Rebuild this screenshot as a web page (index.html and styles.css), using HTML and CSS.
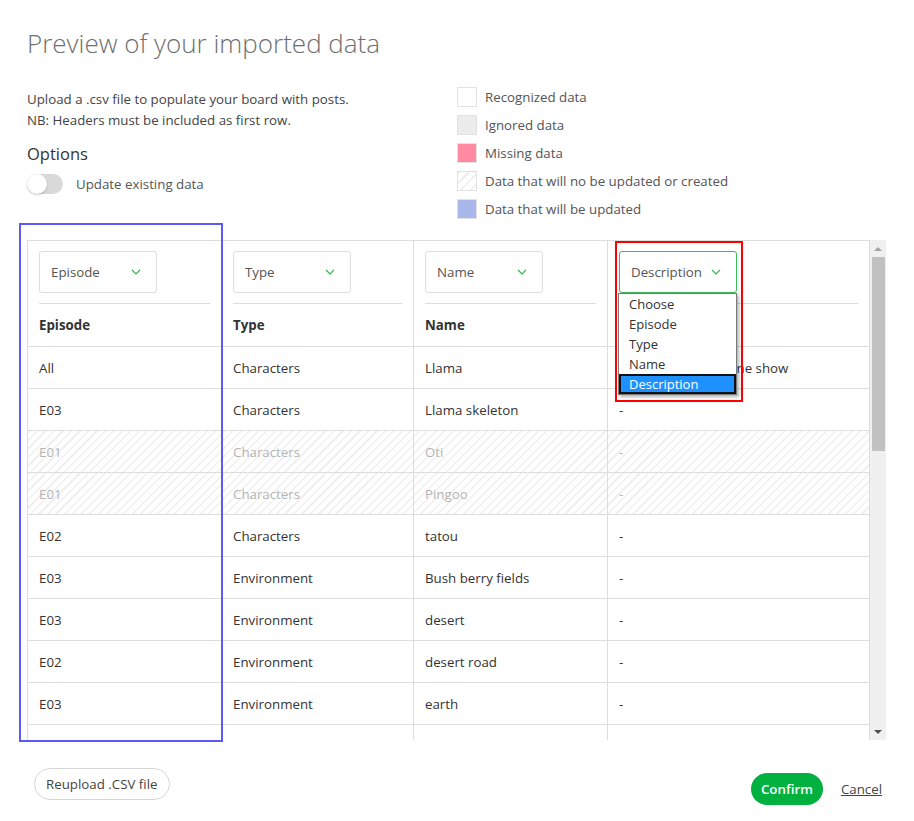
FILE: index.html
```html
<!DOCTYPE html>
<html lang="en">
<head>
<meta charset="utf-8">
<title>Preview of your imported data</title>
<link rel="stylesheet" href="styles.css">
</head>
<body>
<div class="page">
  <h1 class="title">Preview of your imported data</h1>

  <div class="top">
    <div class="intro">
      <p class="desc">Upload a .csv file to populate your board with posts.<br>NB: Headers must be included as first row.</p>
      <h2 class="options">Options</h2>
      <label class="toggle-row"><span class="toggle"><span class="knob"></span></span><span>Update existing data</span></label>
    </div>
    <ul class="legend">
      <li><span class="swatch sw-recognized"></span>Recognized data</li>
      <li><span class="swatch sw-ignored"></span>Ignored data</li>
      <li><span class="swatch sw-missing"></span>Missing data</li>
      <li><span class="swatch sw-hatched"></span>Data that will no be updated or created</li>
      <li><span class="swatch sw-updated"></span>Data that will be updated</li>
    </ul>
  </div>

  <div class="table-area">
    <div class="grid-wrap">
      <div class="viewport">
        <div class="row head">
          <div class="hcell">
            <div class="select"><span>Episode</span><svg class="chev" width="10" height="6" viewBox="0 0 10 6"><polyline points="1,1 5,5 9,1"/></svg></div>
            <div class="hline"></div>
            <div class="hlabel">Episode</div>
          </div>
          <div class="hcell">
            <div class="select"><span>Type</span><svg class="chev" width="10" height="6" viewBox="0 0 10 6"><polyline points="1,1 5,5 9,1"/></svg></div>
            <div class="hline"></div>
            <div class="hlabel">Type</div>
          </div>
          <div class="hcell">
            <div class="select"><span>Name</span><svg class="chev" width="10" height="6" viewBox="0 0 10 6"><polyline points="1,1 5,5 9,1"/></svg></div>
            <div class="hline"></div>
            <div class="hlabel">Name</div>
          </div>
          <div class="hcell">
            <div class="select active"><span>Description</span><svg class="chev" width="10" height="6" viewBox="0 0 10 6"><polyline points="1,1 5,5 9,1"/></svg></div>
            <div class="hline"></div>
            <div class="hlabel">Description</div>
          </div>
        </div>

        <div class="row"><div class="cell">All</div><div class="cell">Characters</div><div class="cell">Llama</div><div class="cell">Main star seen in one show</div></div>
        <div class="row"><div class="cell">E03</div><div class="cell">Characters</div><div class="cell">Llama skeleton</div><div class="cell">-</div></div>
        <div class="row skip"><div class="cell">E01</div><div class="cell">Characters</div><div class="cell">Oti</div><div class="cell">-</div></div>
        <div class="row skip"><div class="cell">E01</div><div class="cell">Characters</div><div class="cell">Pingoo</div><div class="cell">-</div></div>
        <div class="row"><div class="cell">E02</div><div class="cell">Characters</div><div class="cell">tatou</div><div class="cell">-</div></div>
        <div class="row"><div class="cell">E03</div><div class="cell">Environment</div><div class="cell">Bush berry fields</div><div class="cell">-</div></div>
        <div class="row"><div class="cell">E03</div><div class="cell">Environment</div><div class="cell">desert</div><div class="cell">-</div></div>
        <div class="row"><div class="cell">E02</div><div class="cell">Environment</div><div class="cell">desert road</div><div class="cell">-</div></div>
        <div class="row"><div class="cell">E03</div><div class="cell">Environment</div><div class="cell">earth</div><div class="cell">-</div></div>
        <div class="row"><div class="cell"></div><div class="cell"></div><div class="cell"></div><div class="cell"></div></div>
      </div>
      <div class="scrollbar">
        <div class="sb-btn"><span class="arrow-up"></span></div>
        <div class="sb-thumb"></div>
        <div class="sb-track"></div>
        <div class="sb-btn"><span class="arrow-down"></span></div>
      </div>
    </div>

    <div class="hl-blue"></div>
    <div class="hl-red"></div>
    <ul class="dropdown">
      <li>Choose</li>
      <li>Episode</li>
      <li>Type</li>
      <li>Name</li>
      <li class="selected">Description</li>
    </ul>
  </div>

  <div class="footer">
    <button class="btn-outline" type="button">Reupload .CSV file</button>
    <div class="actions">
      <button class="btn-confirm" type="button">Confirm</button>
      <a class="cancel" href="#">Cancel</a>
    </div>
  </div>
</div>
</body>
</html>
```

FILE: styles.css
```css
* { box-sizing: border-box; }
html, body { margin: 0; background: #fff; }
body {
  font-family: "Open Sans", "Noto Sans", sans-serif;
  font-size: 13.3px;
  color: #444;
}
.page { width: 914px; padding: 25px 28px 0 27px; }

.title {
  margin: 0;
  font-size: 26px;
  font-weight: 300;
  line-height: 36px;
  color: #6f6f6f;
}

.top {
  display: grid;
  grid-template-columns: 430px 1fr;
  margin-top: 26px;
  height: 132px;
}
.desc { margin: 2px 0 0; line-height: 21px; color: #444; }
.options {
  margin: 12px 0 0;
  font-size: 16.5px;
  font-weight: 400;
  line-height: 22px;
  color: #333;
}
.toggle-row { display: flex; align-items: center; gap: 13px; margin-top: 9px; color: #555; }
.toggle {
  display: flex;
  width: 36px;
  height: 20px;
  border-radius: 10px;
  background: #d9d9d9;
}
.knob {
  width: 20px;
  height: 20px;
  border-radius: 50%;
  background: #fff;
  box-shadow: 0 1px 2px rgba(0,0,0,.22);
}

.legend {
  list-style: none;
  margin: 0;
  padding: 0;
  display: flex;
  flex-direction: column;
  gap: 8px;
}
.legend li { display: flex; align-items: center; gap: 8px; height: 20px; color: #555; }
.swatch { width: 20px; height: 20px; border: 1px solid #e2e2e2; flex: none; }
.sw-recognized { background: #fff; }
.sw-ignored { background: #ececec; }
.sw-missing { background: #ff8aa1; }
.sw-hatched {
  background: repeating-linear-gradient(135deg, #eeeeee 0 1.5px, #fff 1.5px 7px);
}
.sw-updated { background: #a9b7ea; }

/* table */
.table-area { position: relative; margin-top: 21px; }
.grid-wrap { display: flex; height: 500px; }
.viewport {
  flex: 1;
  overflow: hidden;
  border-top: 1px solid #ddd;
  border-left: 1px solid #ddd;
}
.row {
  display: grid;
  grid-template-columns: 194px 192px 194px 1fr;
  height: 42px;
  border-bottom: 1px solid #ddd;
}
.row.head { height: 106px; }
.cell {
  display: flex;
  align-items: center;
  padding: 0 11px;
  border-right: 1px solid #ddd;
  color: #333;
  white-space: nowrap;
  overflow: hidden;
}
.cell:last-child, .hcell:last-child { border-right: 0; }
.row.skip {
  background: repeating-linear-gradient(135deg, #f0f0f0 0 1.5px, #fff 1.5px 6px);
}
.row.skip .cell { color: #b4b4b4; }

.hcell {
  display: flex;
  flex-direction: column;
  padding: 10px 11px 0;
  border-right: 1px solid #ddd;
}
.select {
  width: 118px;
  height: 42px;
  flex: none;
  display: flex;
  align-items: center;
  justify-content: space-between;
  padding: 0 15px 0 11px;
  border: 1px solid #ddd;
  border-radius: 3px;
  color: #555;
  background: #fff;
}
.select.active { border-color: #3cb95a; box-shadow: 0 2px 3px rgba(0,0,0,.08); }
.chev { fill: none; stroke: #2db84c; stroke-width: 1.2; }
.hline { height: 1px; background: #ddd; margin-top: 10px; flex: none; }
.hlabel {
  height: 42px;
  display: flex;
  align-items: center;
  font-weight: 700;
  color: #333;
}

.scrollbar {
  width: 17px;
  flex: none;
  display: flex;
  flex-direction: column;
  background: #f0f0f0;
  border-left: 1px solid #ddd;
}
.sb-btn { height: 17px; display: flex; align-items: center; justify-content: center; flex: none; }
.arrow-up {
  width: 0; height: 0;
  border-left: 4px solid transparent;
  border-right: 4px solid transparent;
  border-bottom: 4px solid #a3a3a3;
}
.arrow-down {
  width: 0; height: 0;
  border-left: 4px solid transparent;
  border-right: 4px solid transparent;
  border-top: 4px solid #505050;
}
.sb-thumb { height: 194px; margin: 0 1px 0 2px; background: #c1c1c1; flex: none; }
.sb-track { flex: 1; }

/* overlays */
.hl-blue {
  position: absolute;
  left: -8px;
  top: -17px;
  width: 204px;
  height: 519px;
  border: 2px solid #5a5af7;
  pointer-events: none;
}
.hl-red {
  position: absolute;
  left: 588px;
  top: 1px;
  width: 128px;
  height: 161px;
  border: 2px solid #ff0000;
  pointer-events: none;
}
.dropdown {
  position: absolute;
  left: 591px;
  top: 53px;
  width: 119px;
  margin: 0;
  padding: 0;
  list-style: none;
  background: #fff;
  border: 1px solid #7a7a7a;
  box-shadow: 2px 2px 3px rgba(0,0,0,.3);
}
.dropdown li {
  height: 20px;
  line-height: 20px;
  padding-left: 10px;
  color: #333;
  font-size: 13px;
}
.dropdown li.selected {
  background: #1e90ff;
  color: #fff;
  box-shadow: inset 0 0 0 2px #111;
}

/* footer */
.footer {
  display: flex;
  justify-content: space-between;
  align-items: flex-start;
  margin-top: 28px;
  padding: 0 4px 0 7px;
}
.btn-outline {
  height: 32px;
  padding: 0 11px;
  border: 1px solid #d6d6d6;
  border-radius: 16px;
  background: #fff;
  font: inherit;
  color: #444;
}
.actions { display: flex; align-items: center; gap: 18px; margin-top: 5px; }
.btn-confirm {
  height: 32px;
  padding: 0 10px;
  border: 0;
  border-radius: 16px;
  background: #00b140;
  color: #fff;
  font: inherit;
  font-weight: 600;
}
.cancel { color: #444; text-decoration: underline; }
```
